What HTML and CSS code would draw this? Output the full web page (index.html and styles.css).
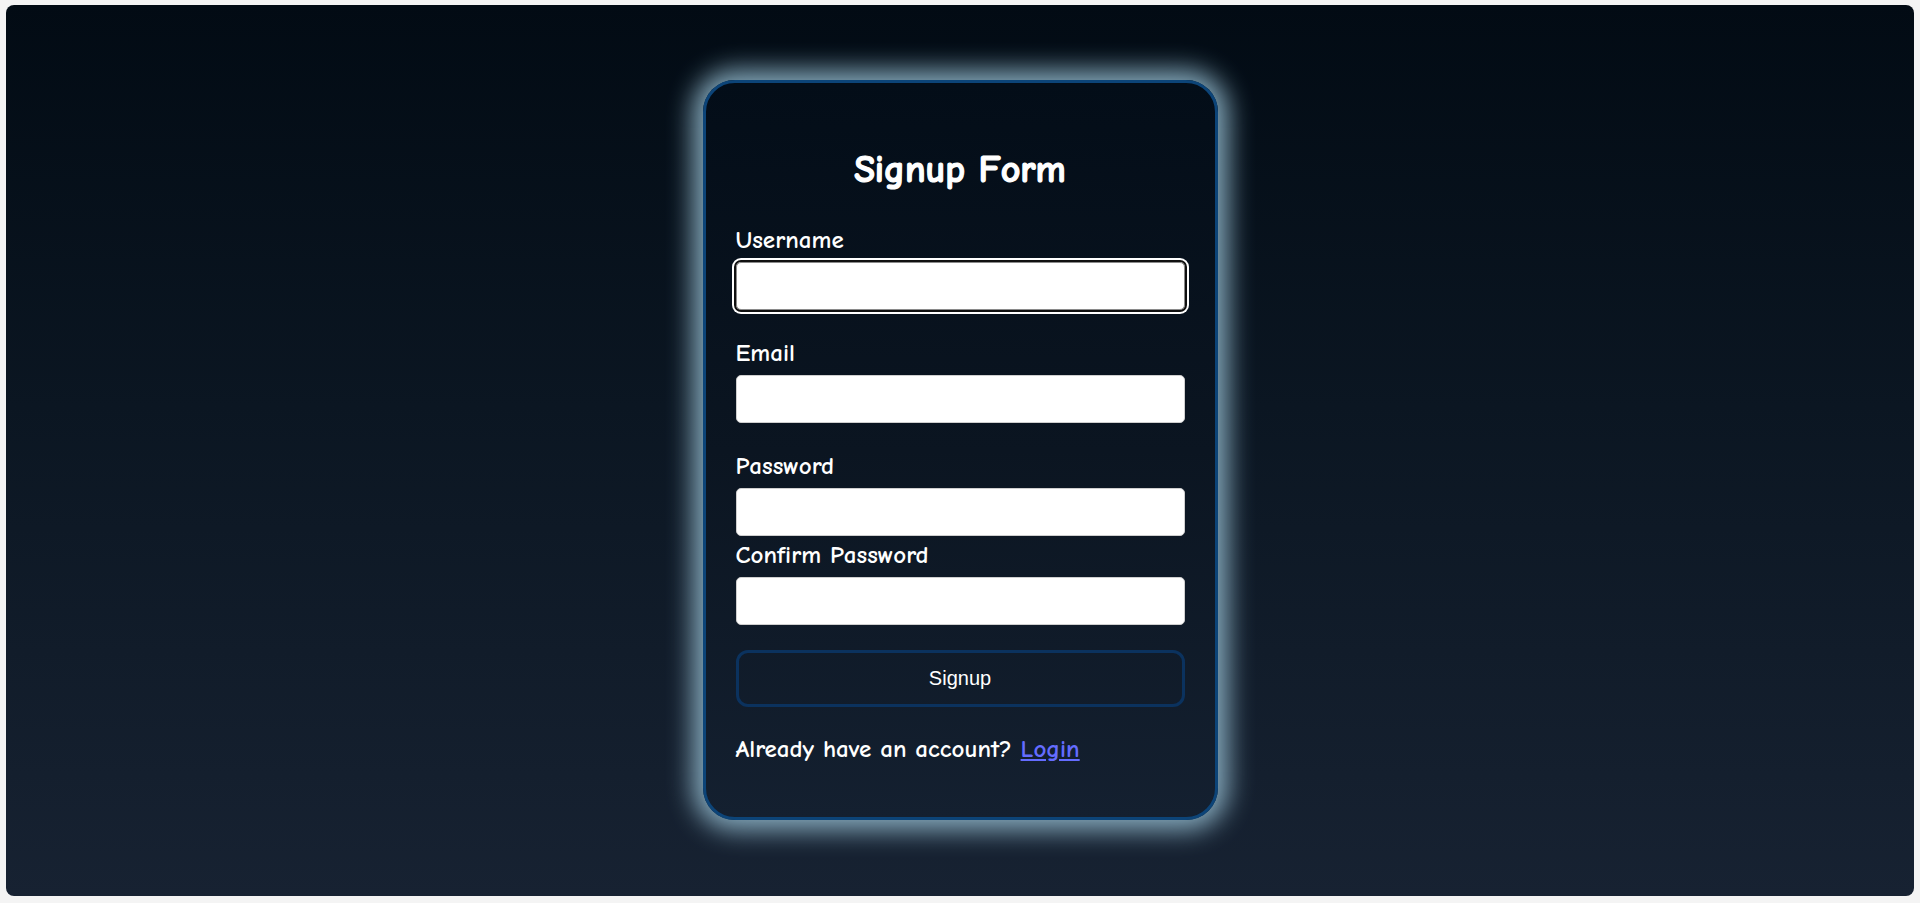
FILE: index.html
```html
<!DOCTYPE html>
<html lang="en">
<head>
<meta charset="utf-8">
<title>Signup Form</title>
<link rel="stylesheet" href="styles.css">
</head>
<body>
<div class="page">
  <form class="card">
    <h2 class="title">Signup Form</h2>
    <div class="field">
      <label class="label" for="username">Username</label>
      <input class="input input-focused" id="username" type="text">
    </div>
    <div class="field">
      <label class="label" for="email">Email</label>
      <input class="input" id="email" type="email">
    </div>
    <div class="field field-tight">
      <label class="label" for="password">Password</label>
      <input class="input" id="password" type="password">
    </div>
    <div class="field field-last">
      <label class="label" for="confirm">Confirm Password</label>
      <input class="input" id="confirm" type="password">
    </div>
    <button class="btn" type="button">Signup</button>
    <p class="switch">Already have an account? <a class="link" href="#">Login</a></p>
  </form>
</div>
</body>
</html>
```
FILE: styles.css
```css
* {
  box-sizing: border-box;
}

html, body {
  margin: 0;
  background: #f4f4f4;
}

body {
  padding: 5px 6px 0;
  font-family: "Comic Sans MS", "Comic Neue", Lato, sans-serif;
  color: #ffffff;
}

.page {
  height: 891px;
  border-radius: 8px;
  background: linear-gradient(180deg, #020b14 0%, #0b1622 45%, #172232 100%);
  display: flex;
  justify-content: center;
  align-items: flex-start;
  padding-top: 75px;
}

.card {
  width: 515px;
  height: 740px;
  border: 3px solid #0c4478;
  border-radius: 32px;
  background: linear-gradient(180deg, #030d18 0%, #0b1521 50%, #142030 100%);
  box-shadow: 0 0 26px 10px rgba(150, 190, 210, 0.88);
  padding: 67px 30px 0;
  display: flex;
  flex-direction: column;
}

.title {
  margin: 0 0 35px;
  font-size: 38px;
  line-height: 40px;
  font-weight: 700;
  text-align: center;
  -webkit-text-stroke: 1.2px #ffffff;
}

.field {
  display: flex;
  flex-direction: column;
  margin-bottom: 28px;
}

.field-tight {
  margin-bottom: 4px;
}

.field-last {
  margin-bottom: 25px;
}

.label {
  display: block;
  font-size: 25px;
  font-weight: 700;
  line-height: 30px;
  margin-bottom: 7px;
}

.input {
  width: 100%;
  height: 48px;
  border: 1px solid #cfcfcf;
  border-radius: 5px;
  background: #ffffff;
  padding: 0 12px;
  font-size: 16px;
}

.input-focused {
  border-color: #8a8a8a;
  outline: 2px solid #101010;
  box-shadow: 0 0 0 4px #ffffff;
}

.btn {
  width: 100%;
  height: 57px;
  border: 3px solid #0b325e;
  border-radius: 12px;
  background: transparent;
  color: #ffffff;
  font-family: "Liberation Sans", Arial, sans-serif;
  font-size: 20px;
}

.switch {
  margin: 27px 0 0;
  font-size: 25px;
  font-weight: 700;
  line-height: 30px;
}

.link {
  color: #646cff;
  text-decoration: underline;
}
```
